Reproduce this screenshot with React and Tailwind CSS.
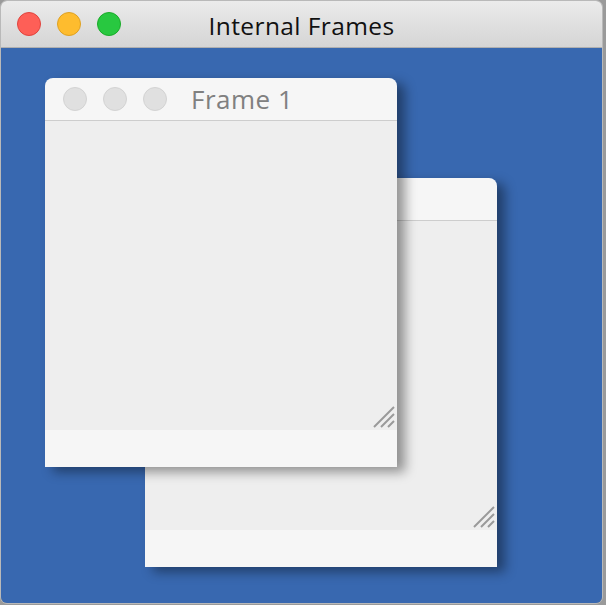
export default function App() {
  // the two internal frames sit on the desktop at fixed spots
  const frames = [
    { id: 2, title: "Frame 2", pos: "left-[144px] top-[130px]" },
    { id: 1, title: "Frame 1", pos: "left-[44px] top-[30px]" },
  ];

  return (
    <div className="w-[606px] h-[605px] bg-[#9a9a9a] font-['Liberation_Sans',Arial,sans-serif]">
      <div className="w-[603px] h-[604px] rounded-[7px] overflow-hidden border border-[#b9b9b9] flex flex-col">
        <div className="h-[47px] shrink-0 bg-gradient-to-b from-[#ebebeb] to-[#d5d5d5] border-b border-[#b0b0b0] flex items-center relative">
          <div className="flex gap-[16px] pl-[16px]">
            <span className="w-[24px] h-[24px] rounded-full bg-[#fe5f57] border border-[#e0443e]" />
            <span className="w-[24px] h-[24px] rounded-full bg-[#febc2e] border border-[#dea123]" />
            <span className="w-[24px] h-[24px] rounded-full bg-[#28c840] border border-[#1aab29]" />
          </div>
          <div className="absolute inset-0 flex items-center justify-center text-[24.5px] tracking-[0.4px] text-[#111111] font-['Open_Sans',sans-serif] pt-[4px]">
            Internal Frames
          </div>
        </div>

        <div className="flex-1 bg-[#3868b0] relative">
          {frames.map((f) => (
            <div
              key={f.id}
              className={`absolute ${f.pos} w-[352px] h-[389px] flex flex-col rounded-t-[8px] overflow-hidden shadow-[8px_5px_12px_rgba(0,0,0,0.4)]`}
            >
              <div className="h-[43px] shrink-0 bg-[#f6f6f6] border-b border-[#cdcdcd] flex items-center">
                <div className="flex gap-[16px] pl-[18px]">
                  <span className="w-[24px] h-[24px] rounded-full bg-[#e0e0e0] border border-[#d3d3d3]" />
                  <span className="w-[24px] h-[24px] rounded-full bg-[#e0e0e0] border border-[#d3d3d3]" />
                  <span className="w-[24px] h-[24px] rounded-full bg-[#e0e0e0] border border-[#d3d3d3]" />
                </div>
                <span className="ml-[24px] text-[26px] tracking-[0.5px] text-[#808080] font-['Open_Sans',sans-serif] pt-[1px]">{f.title}</span>
              </div>
              <div className="flex-1 bg-[#eeeeee] relative">
                <svg className="absolute right-[2px] bottom-[2px]" width="22" height="22" viewBox="0 0 22 22">
                  <path d="M1 21 L21 1 M8 21 L21 8 M15 21 L21 15" stroke="#9a9a9a" strokeWidth="2" />
                </svg>
              </div>
              <div className="h-[37px] shrink-0 bg-[#f6f6f6]" />
            </div>
          ))}
        </div>
      </div>
    </div>
  );
}
